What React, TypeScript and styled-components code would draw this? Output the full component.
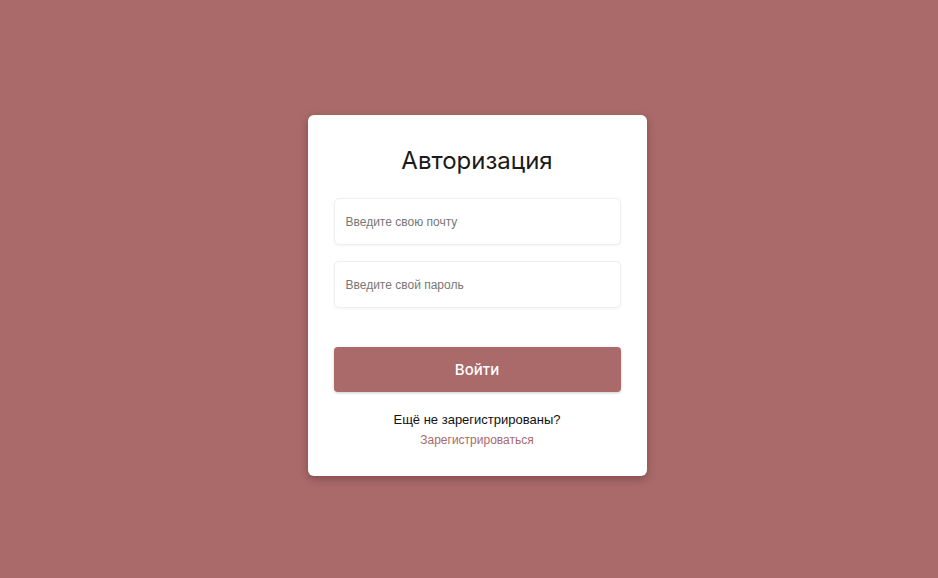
import React from "react";
import styled, { createGlobalStyle } from "styled-components";

const Global = createGlobalStyle`
  html { overflow: hidden; background: #aa6a6a; }
  body { margin: 8px; background: #aa6a6a; font-family: Inter, "Noto Sans", Arial, sans-serif; }
`;

const Page = styled.div`
  width: 100vw;
  height: 100vh;
  box-sizing: border-box;
  padding-bottom: 3px;
  display: flex;
  align-items: center;
  justify-content: center;
`;

const Card = styled.form`
  width: 339px;
  box-sizing: border-box;
  background: #ffffff;
  border-radius: 6px;
  box-shadow: 0 3px 8px rgba(60, 20, 20, 0.35);
  padding: 31px 26px 28px;
  display: flex;
  flex-direction: column;
  align-items: stretch;
`;

const Title = styled.h1`
  margin: 0 0 23px;
  text-align: center;
  font-size: 24px;
  font-weight: 400;
  line-height: 29px;
  color: #1a1a1a;
`;

const Field = styled.input`
  height: 47px;
  box-sizing: border-box;
  border: 1px solid #f0eeee;
  border-radius: 5px;
  padding: 0 11px;
  font-family: Arial, "Liberation Sans", sans-serif;
  font-size: 12px;
  color: #333;
  outline: none;
  margin-bottom: ${(p: { $gap: number }) => p.$gap}px;
  box-shadow: 0 1px 3px rgba(0, 0, 0, 0.05);
  &::placeholder {
    color: #777;
  }
`;

const Submit = styled.button`
  height: 45px;
  border: none;
  border-radius: 4px;
  background: #aa6a6a;
  color: #fff;
  font-family: Inter, "Noto Sans", sans-serif;
  font-size: 15px;
  font-weight: 500;
  box-shadow: 0 1px 3px rgba(0, 0, 0, 0.2);
  cursor: pointer;
  margin-bottom: 20px;
`;

const Footer = styled.div`
  display: flex;
  flex-direction: column;
  align-items: center;
  gap: 5px;
  font-family: Arial, "Liberation Sans", sans-serif;
`;

const Question = styled.span`
  font-size: 13px;
  color: #111;
  line-height: 16px;
`;

const Link = styled.a`
  font-size: 12px;
  color: #aa6a6a;
  text-decoration: none;
  line-height: 15px;
`;

export default function App() {
  return (
    <>
      <Global />
      <Page>
        <Card onSubmit={(e) => e.preventDefault()}>
          <Title>Авторизация</Title>
          <Field $gap={16} type="email" placeholder="Введите свою почту" />
          <Field $gap={39} type="password" placeholder="Введите свой пароль" />
          <Submit type="submit">Войти</Submit>
          <Footer>
            <Question>Ещё не зарегистрированы?</Question>
            <Link href="#">Зарегистрироваться</Link>
          </Footer>
        </Card>
      </Page>
    </>
  );
}
